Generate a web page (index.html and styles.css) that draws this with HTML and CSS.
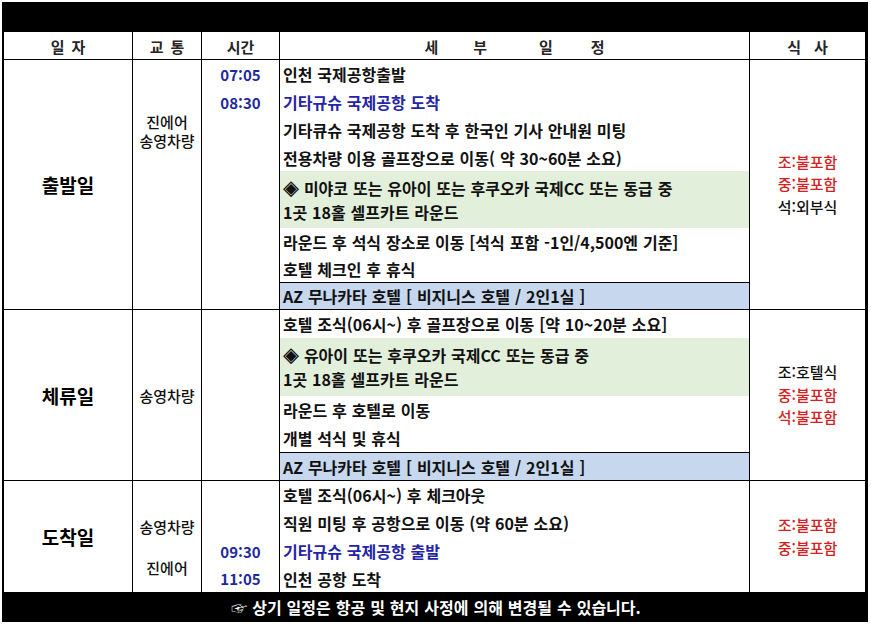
FILE: index.html
```html
<!DOCTYPE html>
<html lang="ko">
<head>
<meta charset="utf-8">
<title>일정표</title>
<link rel="stylesheet" href="styles.css">
</head>
<body>
<div class="sheet">
  <div class="bar"></div>
  <div class="table">
    <div class="row head">
      <div class="cell hc"><span>일</span><span>자</span></div>
      <div class="cell hc"><span>교</span><span>통</span></div>
      <div class="cell hc"><span>시간</span></div>
      <div class="cell hc plan"><span>세</span><span class="g2">부</span><span class="g3">일</span><span class="g4">정</span></div>
      <div class="cell hc wide"><span>식</span><span>사</span></div>
    </div>

    <div class="row day">
      <div class="cell date">출발일</div>
      <div class="cell trans t1"><span>진에어</span><span>송영차량</span></div>
      <div class="cell times">
        <div class="line">07:05</div>
        <div class="line">08:30</div>
      </div>
      <div class="cell sched">
        <div class="line">인천 국제공항출발</div>
        <div class="line blue">기타규슈 국제공항 도착</div>
        <div class="line">기타큐슈 국제공항 도착 후 한국인 기사 안내원 미팅</div>
        <div class="line h27">전용차량 이용 골프장으로 이동( 약 30~60분 소요)</div>
        <div class="line green h57"><span>◈ 미야코 또는 유아이 또는 후쿠오카 국제CC 또는 동급 중</span><span>1곳 18홀 셀프카트 라운드</span></div>
        <div class="line h27">라운드 후 석식 장소로 이동 [석식 포함 -1인/4,500엔 기준]</div>
        <div class="line h27">호텔 체크인 후 휴식</div>
        <div class="line hotel h26">AZ 무나카타 호텔 [ 비지니스 호텔 / 2인1실 ]</div>
      </div>
      <div class="cell meal"><span class="red">조:불포함</span><span class="red">중:불포함</span><span>석:외부식</span></div>
    </div>

    <div class="row day">
      <div class="cell date">체류일</div>
      <div class="cell trans t2"><span>송영차량</span></div>
      <div class="cell times"></div>
      <div class="cell sched">
        <div class="line">호텔 조식(06시~) 후 골프장으로 이동 [약 10~20분 소요]</div>
        <div class="line green h58"><span>◈ 유아이 또는 후쿠오카 국제CC 또는 동급 중</span><span>1곳 18홀 셀프카트 라운드</span></div>
        <div class="line">라운드 후 호텔로 이동</div>
        <div class="line">개별 석식 및 휴식</div>
        <div class="line hotel h27">AZ 무나카타 호텔 [ 비지니스 호텔 / 2인1실 ]</div>
      </div>
      <div class="cell meal"><span>조:호텔식</span><span class="red">중:불포함</span><span class="red">석:불포함</span></div>
    </div>

    <div class="row day last">
      <div class="cell date">도착일</div>
      <div class="cell trans t3"><span>송영차량</span><span class="second">진에어</span></div>
      <div class="cell times">
        <div class="line"></div>
        <div class="line"></div>
        <div class="line">09:30</div>
        <div class="line h27">11:05</div>
      </div>
      <div class="cell sched">
        <div class="line">호텔 조식(06시~) 후 체크아웃</div>
        <div class="line">직원 미팅 후 공항으로 이동 (약 60분 소요)</div>
        <div class="line blue">기타규슈 국제공항 출발</div>
        <div class="line h27">인천 공항 도착</div>
      </div>
      <div class="cell meal"><span class="red">조:불포함</span><span class="red">중:불포함</span></div>
    </div>
  </div>
  <div class="bar foot">☞ 상기 일정은 항공 및 현지 사정에 의해 변경될 수 있습니다.</div>
</div>
</body>
</html>
```

FILE: styles.css
```css
html, body {
  margin: 0;
  padding: 0;
  background: #ffffff;
}

body {
  font-family: "Noto Sans CJK KR", "Noto Sans", sans-serif;
  font-size: 15px;
  color: #111111;
}

.sheet {
  width: 866px;
  margin: 2px 0 0 2px;
}

.bar {
  height: 30px;
  background: #000000;
}

.foot {
  color: #ffffff;
  font-weight: 700;
  font-size: 16px;
  display: flex;
  align-items: center;
  justify-content: center;
  word-spacing: 0.5px;
  padding-left: 2px;
}

.table {
  border-left: 2px solid #000000;
  border-right: 3px solid #000000;
}

.row {
  display: grid;
  grid-template-columns: 129px 69px 78px 470px 115px;
  border-bottom: 1px solid #000000;
}

.row.last {
  border-bottom: none;
}

.cell {
  border-right: 1px solid #000000;
  min-width: 0;
}

.cell:last-child {
  border-right: none;
}

.head {
  height: 27px;
}

.hc {
  display: flex;
  align-items: center;
  justify-content: center;
  gap: 7px;
  font-weight: 700;
  color: #262626;
  padding-top: 1px;
}

.hc.wide {
  gap: 13px;
}

.hc.plan {
  gap: 0;
}

.plan .g2 { margin-left: 35px; }
.plan .g3 { margin-left: 52px; }
.plan .g4 { margin-left: 38px; }

.date {
  display: flex;
  align-items: center;
  justify-content: center;
  font-size: 19px;
  font-weight: 700;
  color: #000000;
}

.trans {
  display: flex;
  flex-direction: column;
  align-items: center;
  line-height: 19px;
  font-weight: 500;
  color: #111111;
}

.t1 { padding-top: 52px; }
.t2 { justify-content: center; }
.t3 { padding-top: 36px; line-height: 20px; }
.t3 .second { margin-top: 21px; }

.times .line {
  justify-content: center;
  padding-left: 0;
  font-weight: 700;
  color: #1f2a9e;
}

.line {
  height: 28px;
  display: flex;
  align-items: center;
  padding-left: 3px;
  white-space: nowrap;
}

.sched .line {
  font-size: 16px;
  font-weight: 700;
  word-spacing: 0.4px;
}

.line.h26 { height: 26px; }
.line.h27 { height: 27px; }
.line.h57 { height: 57px; }
.line.h58 { height: 58px; }

.line.blue {
  color: #2424a8;
}

.line.green {
  background: #e2efda;
  flex-direction: column;
  align-items: flex-start;
  justify-content: center;
  line-height: 24px;
}

.line.hotel {
  background: #c6d7ee;
  border-top: 1px solid #000000;
}

.meal {
  display: flex;
  flex-direction: column;
  align-items: center;
  justify-content: center;
  line-height: 22.5px;
  font-weight: 500;
  color: #111111;
}

.meal .red {
  color: #d42222;
}
```
